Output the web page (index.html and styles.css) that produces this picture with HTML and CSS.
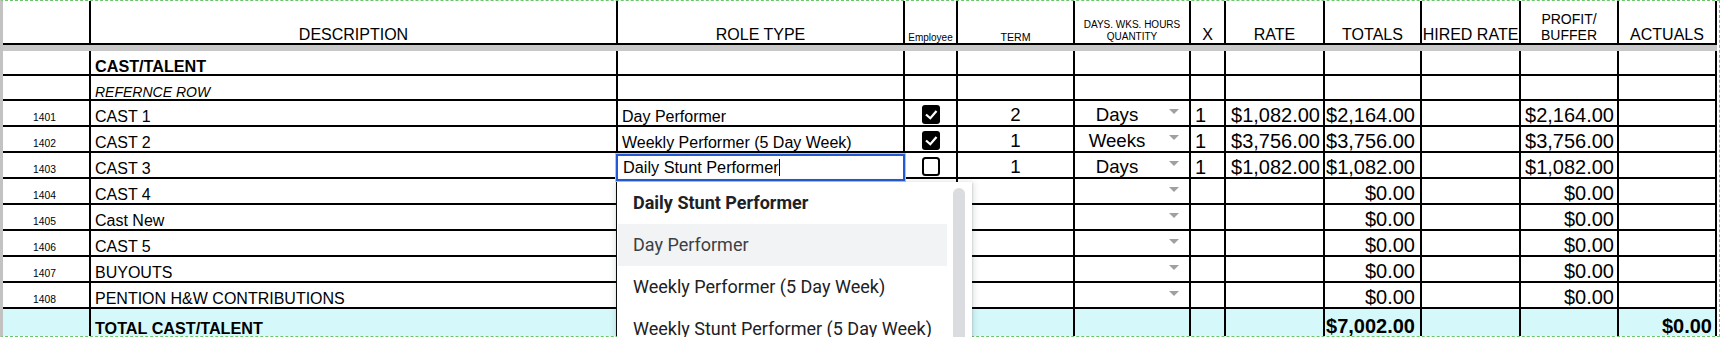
FILE: index.html
```html
<!DOCTYPE html>
<html>
<head>
    <meta charset="utf-8">
    <title>Budget - Cast/Talent</title>
    <link rel="stylesheet" href="styles.css">
</head>
<body>
<div class="sheet">
    <table class="grid">
        <colgroup>
            <col class="c-num"><col class="c-desc"><col class="c-role"><col class="c-emp">
            <col class="c-term"><col class="c-unit"><col class="c-x"><col class="c-rate">
            <col class="c-tot"><col class="c-hired"><col class="c-profit"><col class="c-act">
        </colgroup>
        <thead>
            <tr class="head">
                <th></th>
                <th>DESCRIPTION</th>
                <th>ROLE TYPE</th>
                <th class="tiny">Employee</th>
                <th class="tiny hd-term">TERM</th>
                <th class="tiny two">DAYS. WKS. HOURS<br>QUANTITY</th>
                <th>X</th>
                <th>RATE</th>
                <th>TOTALS</th>
                <th class="tight">HIRED RATE</th>
                <th class="small two">PROFIT/<br>BUFFER</th>
                <th>ACTUALS</th>
            </tr>
            <tr class="band"><td colspan="12"></td></tr>
        </thead>
        <tbody>
            <tr class="short">
                <td></td><td class="desc b">CAST/TALENT</td>
                <td></td><td></td><td></td><td></td><td></td><td></td><td></td><td></td><td></td><td></td>
            </tr>
            <tr class="short">
                <td></td><td class="desc i">REFERNCE ROW</td>
                <td></td><td></td><td></td><td></td><td></td><td></td><td></td><td></td><td></td><td></td>
            </tr>
            <tr>
                <td class="num">1401</td>
                <td class="desc">CAST 1</td>
                <td class="role">Day Performer</td>
                <td class="chk"><svg width="18" height="19" viewBox="0 0 18 19"><rect width="18" height="19" rx="3"/><path d="M4 9.5l4.3 3.8L14.5 6" fill="none" stroke="#fff" stroke-width="2.2"/></svg></td>
                <td class="qty">2</td>
                <td class="unit"><div class="pick"><span>Days</span><i class="arrow"></i></div></td>
                <td class="x">1</td>
                <td class="money">$1,082.00</td>
                <td class="money sum">$2,164.00</td>
                <td></td>
                <td class="money">$2,164.00</td>
                <td></td>
            </tr>
            <tr>
                <td class="num">1402</td>
                <td class="desc">CAST 2</td>
                <td class="role">Weekly Performer (5 Day Week)</td>
                <td class="chk"><svg width="18" height="19" viewBox="0 0 18 19"><rect width="18" height="19" rx="3"/><path d="M4 9.5l4.3 3.8L14.5 6" fill="none" stroke="#fff" stroke-width="2.2"/></svg></td>
                <td class="qty">1</td>
                <td class="unit"><div class="pick"><span>Weeks</span><i class="arrow"></i></div></td>
                <td class="x">1</td>
                <td class="money">$3,756.00</td>
                <td class="money sum">$3,756.00</td>
                <td></td>
                <td class="money">$3,756.00</td>
                <td></td>
            </tr>
            <tr>
                <td class="num">1403</td>
                <td class="desc">CAST 3</td>
                <td class="role editing">
                    <div class="editor">Daily Stunt Performer<span class="caret"></span></div>
                    <div class="menu">
                        <ul>
                            <li class="match">Daily Stunt Performer</li>
                            <li class="hover">Day Performer</li>
                            <li>Weekly Performer (5 Day Week)</li>
                            <li>Weekly Stunt Performer (5 Day Week)</li>
                        </ul>
                        <div class="thumb"></div>
                    </div>
                </td>
                <td class="chk"><svg width="18" height="19" viewBox="0 0 18 19"><rect x="1" y="1" width="16" height="17" rx="2.5" fill="#fff" stroke="#000" stroke-width="2"/></svg></td>
                <td class="qty">1</td>
                <td class="unit"><div class="pick"><span>Days</span><i class="arrow"></i></div></td>
                <td class="x">1</td>
                <td class="money">$1,082.00</td>
                <td class="money sum">$1,082.00</td>
                <td></td>
                <td class="money">$1,082.00</td>
                <td></td>
            </tr>
            <tr>
                <td class="num">1404</td>
                <td class="desc">CAST 4</td>
                <td></td><td></td><td></td>
                <td class="unit"><div class="pick"><span></span><i class="arrow"></i></div></td>
                <td></td><td></td>
                <td class="money sum">$0.00</td>
                <td></td>
                <td class="money">$0.00</td>
                <td></td>
            </tr>
            <tr>
                <td class="num">1405</td>
                <td class="desc">Cast New</td>
                <td></td><td></td><td></td>
                <td class="unit"><div class="pick"><span></span><i class="arrow"></i></div></td>
                <td></td><td></td>
                <td class="money sum">$0.00</td>
                <td></td>
                <td class="money">$0.00</td>
                <td></td>
            </tr>
            <tr>
                <td class="num">1406</td>
                <td class="desc">CAST 5</td>
                <td></td><td></td><td></td>
                <td class="unit"><div class="pick"><span></span><i class="arrow"></i></div></td>
                <td></td><td></td>
                <td class="money sum">$0.00</td>
                <td></td>
                <td class="money">$0.00</td>
                <td></td>
            </tr>
            <tr>
                <td class="num">1407</td>
                <td class="desc">BUYOUTS</td>
                <td></td><td></td><td></td>
                <td class="unit"><div class="pick"><span></span><i class="arrow"></i></div></td>
                <td></td><td></td>
                <td class="money sum">$0.00</td>
                <td></td>
                <td class="money">$0.00</td>
                <td></td>
            </tr>
            <tr>
                <td class="num">1408</td>
                <td class="desc">PENTION H&amp;W CONTRIBUTIONS</td>
                <td></td><td></td><td></td>
                <td class="unit"><div class="pick"><span></span><i class="arrow"></i></div></td>
                <td></td><td></td>
                <td class="money sum">$0.00</td>
                <td></td>
                <td class="money">$0.00</td>
                <td></td>
            </tr>
            <tr class="total">
                <td></td>
                <td class="desc b">TOTAL CAST/TALENT</td>
                <td></td><td></td><td></td><td></td><td></td><td></td>
                <td class="money sum">$7,002.00</td>
                <td></td><td></td>
                <td class="money">$0.00</td>
            </tr>
        </tbody>
    </table>
</div>
</body>
</html>
```

FILE: styles.css
```css
body {
    margin: 0;
    background: #fff;
    overflow: hidden;
    font-family: "Liberation Sans", Arial, sans-serif;
    color: #000;
}

.sheet {
    position: relative;
    width: 1716px;
    height: 335px;
    border-top: 1px dashed #6cc56c;
    border-right: 1px dashed #6cc56c;
    border-bottom: 1px dashed #6cc56c;
    border-left: 3px solid #c2c2c2;
}

.grid {
    width: 1714px;
    table-layout: fixed;
    border-collapse: separate;
    border-spacing: 0;
}
.grid th,
.grid td {
    padding: 0;
    border-right: 2px solid #000;
    border-bottom: 2px solid #000;
    vertical-align: bottom;
    line-height: 1;
    white-space: nowrap;
}

/* column widths (border box) */
.c-num { width: 88px; }
.c-desc { width: 527px; }
.c-role { width: 287px; }
.c-emp { width: 53px; }
.c-term { width: 117px; }
.c-unit { width: 116px; }
.c-x { width: 35px; }
.c-rate { width: 99px; }
.c-tot { width: 97px; }
.c-hired { width: 99px; }
.c-profit { width: 98px; }
.c-act { width: 98px; }

/* header */
.head { height: 44px; }
.grid .head th {
    font-weight: normal;
    font-size: 16px;
    text-align: center;
    padding: 0 2px;
}
.grid .head .tiny { font-size: 10px; }
.grid .head .hd-term { font-size: 10.67px; }
.grid .head .two { line-height: 12px; }
.grid .head .small { font-size: 14px; line-height: 16px; }
.grid .head .tight { padding: 0; }

.grid .band td {
    height: 6px;
    background: #c8c8c8;
    border: none;
}

/* body rows */
tbody tr { height: 26px; }
tbody tr.short { height: 25px; }
tbody tr.total { height: 27px; }
.grid .total td {
    background: #d5f9fb;
    border-bottom: none;
}

.grid .num {
    font-size: 10.3px;
    padding: 0 0 2px 30px;
}
.grid .desc {
    font-size: 16px;
    padding-left: 4px;
}
.grid .desc.b {
    font-weight: bold;
    font-size: 16.2px;
}
.grid .desc.i {
    font-style: italic;
    font-size: 14px;
}
.grid .role {
    font-size: 16px;
    padding-left: 4px;
}
.chk svg {
    display: block;
    margin: 0 auto 1px;
}
.grid .qty {
    font-size: 18.67px;
    text-align: center;
}
.grid .unit { vertical-align: top; }
.pick {
    display: flex;
    height: 24px;
}
.pick span {
    flex: 1;
    align-self: flex-end;
    text-align: center;
    font-size: 18.67px;
}
.arrow {
    width: 0;
    height: 0;
    margin: 8px 10px 0 10px;
    border-left: 5px solid transparent;
    border-right: 5px solid transparent;
    border-top: 5px solid #a0a0a0;
}
.grid .x {
    font-size: 20px;
    padding-left: 4px;
}
.grid .money {
    font-size: 20px;
    text-align: right;
    padding-right: 3px;
}
.grid .money.sum { padding-right: 5px; }
.grid .total .money { font-weight: bold; }

/* in-cell editor and suggestion list */
.grid .editing {
    position: relative;
    padding-left: 0;
}
.editor {
    position: absolute;
    left: -2px;
    top: 1px;
    z-index: 2;
    box-sizing: border-box;
    width: 289px;
    height: 27px;
    padding-left: 5px;
    display: flex;
    align-items: center;
    background: #fff;
    border: 2px solid #2359d5;
    box-shadow: 0 0 0 1px #a9c5f7;
    font-size: 16.3px;
    line-height: normal;
}
.caret {
    display: inline-block;
    width: 1px;
    height: 17px;
    background: #000;
    vertical-align: -4px;
}
.menu {
    position: absolute;
    left: -1px;
    top: 29px;
    z-index: 3;
    width: 355px;
    height: 156px;
    overflow: hidden;
    background: #fff;
    box-shadow: 0 2px 6px 2px rgba(60, 64, 67, 0.15), 0 1px 2px rgba(60, 64, 67, 0.3);
    font-family: Roboto, "Liberation Sans", sans-serif;
    font-size: 18px;
    line-height: 42px;
    color: #202124;
}
.menu ul {
    list-style: none;
    margin: 0 25px 0 1px;
    padding: 0;
}
.menu li {
    height: 42px;
    padding-left: 15px;
}
.menu .match { font-weight: bold; }
.menu .hover {
    background: #f1f3f4;
    color: #3c4043;
}
.thumb {
    position: absolute;
    left: 336px;
    top: 6px;
    width: 12px;
    height: 200px;
    border-radius: 6px;
    background: #dadce0;
}
```
